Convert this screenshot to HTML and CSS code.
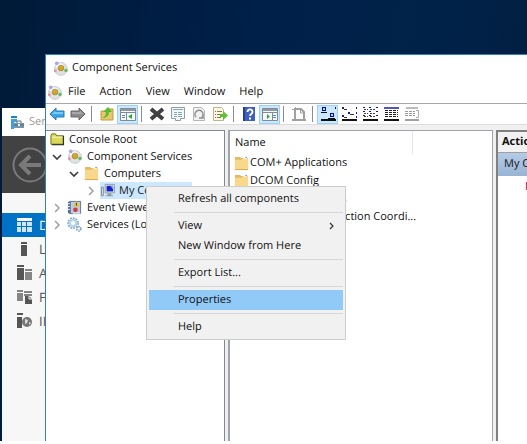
FILE: index.html
```html
<!DOCTYPE html>
<html lang="en">
<head>
<meta charset="utf-8">
<title>Component Services</title>
<link rel="stylesheet" href="styles.css">
</head>
<body>
<svg class="defs" aria-hidden="true">
  <symbol id="com" viewBox="0 0 16 16">
    <circle cx="8.500" cy="8.500" r="6.800" fill="#dfe2e4" stroke="#c6cacd" stroke-width="1"/>
    <ellipse cx="7" cy="5" rx="4" ry="2.500" fill="#f8f9fa"/>
    <circle cx="4" cy="2.500" r="2" fill="#a9a6ea"/>
    <circle cx="2.500" cy="10.500" r="1.500" fill="#ec8c96"/>
    <circle cx="13.800" cy="10" r="1.800" fill="#5fb95b"/>
    <circle cx="8.500" cy="7.500" r="3" fill="#eec63c" stroke="#8a6a10" stroke-width=".7"/>
    <path d="M7 6h1v1H7zM9 6h1v1H9zM7 8h1v1H7zM9 8h1v1H9z" fill="#6b4f0a"/>
  </symbol>
  <symbol id="folder" viewBox="0 0 16 16">
    <path d="M1 1h6v1h8v13H1z" fill="#e3b961"/>
    <path d="M1 4h7l1-1h6v11H1z" fill="#f8d98b"/>
    <path d="M1 14h14v1H1z" fill="#d8aa50"/>
    <path d="M10 1h4v2h-4z" fill="#fff"/><path d="M12 1h2v1h-2z" fill="#5a9bd0"/>
  </symbol>
  <symbol id="root" viewBox="0 0 16 16">
    <path d="M1 4l1-2h4l1 2h7v9H1z" fill="#d9d95c" stroke="#6d6d18"/>
    <path d="M2 5h11v1H2z" fill="#f9f9c0"/><path d="M14 4h1v10H2v-1h12z" fill="#222"/>
  </symbol>
  <symbol id="down" viewBox="0 0 10 10"><path d="M1 3l4 4 4-4" fill="none" stroke="#404040" stroke-width="1.700"/></symbol>
  <symbol id="right" viewBox="0 0 10 10"><path d="M3 1l4 4-4 4" fill="none" stroke="#a0a0a0" stroke-width="1.500"/></symbol>
</svg>

<main class="desktop">
  <section class="window manager" aria-label="Server Manager">
    <header class="manager-title">
      <svg width="15" height="16" viewBox="0 0 15 16"><path d="M1 2h6v2H1z" fill="#1686c8"/><path d="M1 5h6v3H4v7H1z" fill="#41a0d8"/><path d="M4 9h10v5H4z" fill="#7696ab"/><path d="M7 9V7h4v2M4 11h10" fill="none" stroke="#506f85"/><path d="M8 10h2v2H8z" fill="#fff"/></svg>
      <span>Server Manager</span>
    </header>
    <div class="manager-bar">
      <svg width="36" height="36" viewBox="0 0 36 36" fill="none" stroke="#7a7a7a"><circle cx="18" cy="18" r="16.500" stroke-width="2"/><path d="M29 18H10M18 9l-9 9 9 9" stroke-width="4"/></svg>
    </div>
    <nav class="manager-nav">
      <a href="#" class="current"><svg width="16" height="16" viewBox="0 0 16 16"><path d="M0 1h15v3H0z" fill="#fff"/><path d="M0 5h4v4H0zM5 5h4v4H5zM10 5h5v4h-5zM0 10h4v5H0zM5 10h4v5H5zM10 10h5v5h-5z" fill="#cfe5f5"/></svg>Dashboard</a>
      <a href="#"><svg width="16" height="16" viewBox="0 0 16 16" fill="#555"><path d="M4 1h6v2H4zM4 4h6v11H4z"/></svg>Local Server</a>
      <a href="#"><svg width="16" height="16" viewBox="0 0 16 16" fill="#555"><path d="M0 0h7v2H0zM0 3h7v12H0z"/><path d="M8 4h7v2H8zM8 7h7v8H8z" fill="#858585"/></svg>All Servers</a>
      <a href="#"><svg width="16" height="16" viewBox="0 0 16 16" fill="#858585"><path d="M0 1h6v2H0zM0 4h6v8H0zM7 2h8v2H7zM7 5h8v2H7z"/><path d="M8 7h4l3 3v5H8z" fill="#555"/><path d="M12 7v3h3" fill="none" stroke="#f7f7f7"/></svg>File and Storage Services</a>
      <a href="#"><svg width="16" height="16" viewBox="0 0 16 16" fill="#555"><path d="M0 0h6v2H0zM0 4h5v11H0z"/><circle cx="10" cy="9" r="5" fill="#777"/><path d="M8 6l3 1-1 3-2 1zM12 9l2 1-2 2z" fill="#ddd"/></svg>IIS</a>
    </nav>
  </section>

  <section class="window console" aria-label="Component Services">
    <header class="titlebar"><svg class="icon"><use href="#com"/></svg><span>Component Services</span></header>
    <div class="menubar">
      <svg class="icon"><use href="#com"/></svg>
      <button>File</button><button>Action</button><button>View</button><button>Window</button><button>Help</button>
    </div>
    <div class="toolbar">
      <button aria-label="Back"><svg viewBox="0 0 16 16"><path d="M1 8l6-6v3h8v6H7v3z" fill="#3ba5e6" stroke="#247db8"/><path d="M3 8l3-3v1h8v2z" fill="#79ccf5"/></svg></button>
      <button aria-label="Forward"><svg viewBox="0 0 16 16"><path d="M15 8L9 2v3H1v6h8v3z" fill="#8b8b8b" stroke="#666"/><path d="M2 6h8V5l3 3H2z" fill="#a8a8a8"/></svg></button>
      <i></i>
      <button aria-label="Up one level"><svg viewBox="0 0 16 16"><path d="M2 5h5l1-2h6v11H2z" fill="#e9c66d" stroke="#c39a43"/><path d="M3 12c3-1 4-3 4-6H4l5-5 4 5h-3c0 4-3 6-7 6z" fill="#56bd2c"/></svg></button>
      <button class="pressed" aria-label="Show console tree"><svg viewBox="0 0 16 16"><path d="M.5 2.500h15v12H.5z" fill="#f5f7f8" stroke="#7f8b96"/><path d="M1 3h14v2H1z" fill="#8e99a3"/><path d="M6.500 7v7M1 6.500h14" stroke="#7f8b96"/><path d="M2 9.500h3M2 11.500h3" stroke="#6688b0"/><path d="M12 8v5l-4-2.500z" fill="#35a82f"/></svg></button>
      <i></i>
      <button aria-label="Delete"><svg viewBox="0 0 16 16"><path d="M2 3l12 10M14 3L2 13" stroke="#414141" stroke-width="4"/></svg></button>
      <button aria-label="Properties"><svg viewBox="0 0 16 16"><path d="M1.500 1.500h13v11h-4v2h-5v-2h-4z" fill="#f4f6f7" stroke="#919ca3"/><path d="M3 3.500h10M4 6.500h3M8 6.500h4M4 8.500h3M8 8.500h4M4 10.500h3M8 10.500h4" stroke="#7fa9bd"/></svg></button>
      <button aria-label="Refresh"><svg viewBox="0 0 16 16"><path d="M2.500 1.500h8l3 3v10h-11z" fill="#f2f2f2" stroke="#b5b5b5"/><path d="M5 11a4 4 0 1 1 6 0M12 8v4H8" fill="none" stroke="#8f8f8f" stroke-width="1.500"/></svg></button>
      <button aria-label="Export list"><svg viewBox="0 0 16 16"><path d="M1.500 1.500h8l2 2v11h-10z" fill="#fdf8dc" stroke="#bdb68c"/><path d="M3 5.500h1M5 5.500h5M3 8.500h1M5 8.500h4M3 11.500h1M5 11.500h4" stroke="#777"/><path d="M8 8h3V5l5 4.500-5 4.500v-3H8z" fill="#5cc431"/></svg></button>
      <i></i>
      <button aria-label="Help"><svg viewBox="0 0 16 16"><path d="M2 1h12v14H2z" fill="#3d5fc4"/><path d="M2 1h2v14H2z" fill="#263f8e"/><path d="M6.500 6c0-3.500 5-3.500 5 0 0 2-2.500 2-2.500 4" fill="none" stroke="#fff" stroke-width="1.800"/><path d="M8 11.500h2v2H8z" fill="#fff"/></svg></button>
      <button class="pressed" aria-label="Show action pane"><svg viewBox="0 0 16 16"><path d="M.5 2.500h15v12H.5z" fill="#f5f7f8" stroke="#7f8b96"/><path d="M1 3h14v2H1z" fill="#8e99a3"/><path d="M10.500 7v7M1 6.500h14" stroke="#7f8b96"/><path d="M11 9.500h3M11 11.500h3" stroke="#6688b0"/><path d="M5 8v5l3-2.500z" fill="#35a82f"/></svg></button>
      <i></i>
      <button aria-label="New"><svg viewBox="0 0 16 16"><path d="M4 13V3h6l3 3v7" fill="#fff" stroke="#a0a0a0" stroke-width="2"/><path d="M9.500 3v4h3M1 3.500h5M4.500 1v5" fill="none" stroke="#a0a0a0"/><path d="M1 13h14v2H1z" fill="#a0a0a0"/></svg></button>
      <i></i>
      <button class="pressed" aria-label="Large icons"><svg viewBox="0 0 16 16"><path d="M2 1h4v4H2zM10 7h4v4h-4z" fill="#0b0b9a"/><path d="M3 2h2v2H3zM11 8h2v2h-2z" fill="#b9d3f5"/><path d="M15.500 1v2" stroke="#0b0b9a"/><path d="M1 6.500h6M8 12.500h7" stroke="#111"/><path d="M1 13h15v2H1z" fill="#111"/></svg></button>
      <button aria-label="Small icons"><svg viewBox="0 0 16 16"><path d="M1 1h2v2H1zM7 6h2v2H7zM1 9h2v2H1zM15 1h1v2h-1zM15 6h1v2h-1zM15 10h1v2h-1z" fill="#1717a0"/><path d="M3 3.500h3M9 8.500h4M3 11.500h3" stroke="#333"/><path d="M1 13h15v2H1z" fill="#111"/></svg></button>
      <button aria-label="List"><svg viewBox="0 0 16 16"><path d="M1 1h2v1H1zM1 5h2v1H1zM1 9h2v1H1zM7 1h2v1H7zM7 5h2v1H7zM7 9h2v1H7zM14 1h2v1h-2zM14 5h2v1h-2zM14 9h2v1h-2z" fill="#1717a0"/><path d="M2 3.500h4M2 7.500h4M2 10.500h4M8 3.500h5M8 7.500h5M8 10.500h5" stroke="#444" stroke-dasharray="2 1"/><path d="M1 13h15v2H1z" fill="#111"/></svg></button>
      <button aria-label="Details"><svg viewBox="0 0 16 16"><path d="M1 1h15v2H1z" fill="#5555b5"/><path d="M2 4.500h13M2 6.500h13M2 8.500h13M2 10.500h13" stroke="#222" stroke-dasharray="3 1"/><path d="M1 13h15v2H1z" fill="#111"/></svg></button>
      <button aria-label="Customize"><svg viewBox="0 0 16 16"><path d="M2 1h12v2H2z" fill="#bbb"/><path d="M1 5.500h10M1 7.500h10M1 9.500h10" stroke="#999" stroke-dasharray="3 1"/><path d="M12 4.500h2.500v7H12" fill="none" stroke="#aaa"/><path d="M1 13h14v2H1z" fill="#a0a0a0"/></svg></button>
    </div>

    <div class="panes">
      <ul class="tree">
        <li><svg class="icon"><use href="#root"/></svg>Console Root</li>
        <li class="l1"><svg class="twist"><use href="#down"/></svg><svg class="icon"><use href="#com"/></svg>Component Services</li>
        <li class="l2"><svg class="twist"><use href="#down"/></svg><svg class="icon"><use href="#folder"/></svg>Computers</li>
        <li class="l3"><svg class="twist"><use href="#right"/></svg><span class="selected"><svg class="icon" viewBox="0 0 16 16"><path d="M1.500 4.500h2v9h-2z" fill="#e4e7e9" stroke="#7d858b"/><path d="M5.500 1.500h10v9h-10z" fill="#dde3e8" stroke="#939da5"/><path d="M7 3h7v6H7z" fill="#1721c9"/><path d="M11 3h3v4z" fill="#86a7f2"/><path d="M8 11h4v2h2v1H6v-1h2z" fill="#929aa0"/></svg>My Computer</span></li>
        <li class="l1"><svg class="twist"><use href="#right"/></svg><svg class="icon" viewBox="0 0 16 16"><path d="M2.500 1.500h12v13h-12z" fill="#b9cbe6" stroke="#5a6f96"/><path d="M1 2h3v12H1z" fill="#596b8d"/><path d="M1 4h2M1 7h2M1 10h2" stroke="#fff"/><path d="M10 1l4 6H7z" fill="#f3c716"/><path d="M10 3v3" stroke="#333"/><circle cx="9" cy="10.500" r="2.500" fill="#cf3d3c"/><path d="M6 14h8" stroke="#fff"/></svg>Event Viewer (Local)</li>
        <li class="l1"><svg class="twist"><use href="#right"/></svg><svg class="icon" viewBox="0 0 16 16" fill="none"><circle cx="6.500" cy="6.500" r="5.300" stroke="#88adc7" stroke-width="2" stroke-dasharray="2 1"/><circle cx="6.500" cy="6.500" r="3.500" stroke="#b6d5e8" stroke-width="2.500"/><circle cx="12.500" cy="12.500" r="2.200" stroke="#85a9c3" stroke-width="2" stroke-dasharray="1.500 .7"/></svg>Services (Local)</li>
      </ul>
      <div class="list">
        <div class="list-head">Name</div>
        <ul>
          <li><svg class="icon"><use href="#folder"/></svg>COM+ Applications</li>
          <li><svg class="icon"><use href="#folder"/></svg>DCOM Config</li>
          <li><svg class="icon"><use href="#folder"/></svg>Running Processes</li>
          <li><svg class="icon"><use href="#folder"/></svg>Distributed Transaction Coordi...</li>
        </ul>
      </div>
      <aside class="actions">
        <h2>Actions</h2>
        <h3>My Computer</h3>
        <a href="#">More Actions</a>
      </aside>
    </div>
  </section>

  <div class="context" role="menu">
    <button role="menuitem">Refresh all components</button>
    <hr>
    <button role="menuitem">View<svg width="10" height="10" viewBox="0 0 10 10"><path d="M3 2l3 3-3 3" fill="none" stroke="#333" stroke-width="1.200"/></svg></button>
    <button role="menuitem">New Window from Here</button>
    <hr>
    <button role="menuitem">Export List...</button>
    <hr>
    <button role="menuitem" class="hover">Properties</button>
    <hr>
    <button role="menuitem">Help</button>
  </div>
</main>
</body>
</html>
```
FILE: styles.css
```css
* { box-sizing: border-box; }

body {
  margin: 0;
  height: 100vh;
  padding-bottom: 3px;
  background: #fff;
  color: #111;
  font: 11px/16px "Open Sans", "Noto Sans", sans-serif;
  text-rendering: geometricPrecision;
  overflow: hidden;
}

button {
  margin: 0;
  padding: 0;
  border: 0;
  background: none;
  color: inherit;
  font: inherit;
  text-rendering: inherit;
}

ul { margin: 0; padding: 0; list-style: none; }
a { color: inherit; text-decoration: none; }
svg { flex: none; }
.defs { position: absolute; width: 0; height: 0; }
.icon { width: 15px; height: 15px; }

.desktop {
  position: relative;
  height: 100%;
  overflow: hidden;
  background: linear-gradient(100deg, #001a38 0%, #00204a 45%, #012248 75%, #001c3c 100%);
}

.window {
  position: absolute;
  display: flex;
  flex-direction: column;
  overflow: hidden;
  white-space: nowrap;
}

/* Server Manager, behind the console */
.manager {
  left: 2px;
  top: 108px;
  bottom: 0;
  width: 50%;
  background: #f7f7f7;
}
.manager-title {
  display: flex;
  align-items: center;
  gap: 4px;
  height: 28px;
  padding-left: 8px;
  background: #fff;
  color: #999;
}
.manager-bar {
  display: flex;
  align-items: center;
  height: 57px;
  padding-left: 10px;
  background: #424242;
}
.manager-nav { padding-top: 20px; color: #555; }
.manager-nav a {
  display: flex;
  align-items: center;
  gap: 6px;
  height: 24px;
  padding-left: 15px;
  font-size: 13px;
}
.manager-nav .current { background: #0072c6; color: #fff; }

/* Component Services console */
.console {
  left: 45px;
  right: 0;
  top: 54px;
  bottom: 0;
  border: 1px solid #2f80c0;
  border-width: 1px 0 0 1px;
  background: #fff;
}
.titlebar {
  display: flex;
  align-items: center;
  gap: 4px;
  height: 26px;
  padding-left: 7px;
}
.menubar {
  display: flex;
  align-items: center;
  gap: 14px;
  height: 23px;
  padding-left: 1px;
  border-bottom: 1px solid #a8a8a8;
}
.menubar .icon { margin-right: -8px; }
.toolbar {
  display: flex;
  align-items: center;
  height: 20px;
}
.toolbar button {
  display: grid;
  place-items: center;
  width: 21px;
  height: 19px;
}
.toolbar button svg { width: 16px; height: 16px; }
.toolbar .pressed { background: #cce8ff; box-shadow: inset 0 0 0 1px #99d1ff; }
.toolbar i { width: 8px; height: 16px; }
.toolbar i::before {
  content: "";
  display: block;
  width: 1px;
  height: 100%;
  margin-left: 3px;
  background: #8c8c8c;
}

.panes {
  flex: 1;
  display: grid;
  grid-template-columns: 179px 1fr 31px;
  gap: 3px;
  padding-top: 5px;
  background: #f0f0f0;
  border-top: 1px solid #dcdcdc;
}
.tree {
  padding-left: 4px;
  border-top: 1px solid #828790;
  border-right: 1px solid #828790;
  background: #fff;
  overflow: hidden;
}
.tree li { display: flex; align-items: center; gap: 4px; height: 17px; }
.tree .l1 { padding-left: 2px; }
.tree .l2 { padding-left: 19px; }
.tree .l3 { padding-left: 36px; }
.tree .l1, .tree .l2 { gap: 5px; }
.twist { width: 10px; height: 10px; }
.selected {
  display: flex;
  align-items: center;
  gap: 4px;
  width: 92px;
  height: 17px;
  background: #cce8ff;
}

.list {
  border: 1px solid #a0a3aa;
  border-width: 1px 1px 0 2px;
  background: #fff;
  overflow: hidden;
}
.list-head {
  width: 183px;
  height: 23px;
  padding: 4px 0 0 5px;
  border-right: 1px solid #e5e5e5;
}
.list li {
  display: flex;
  align-items: center;
  gap: 1px;
  height: 18px;
  padding-left: 4px;
}

.actions {
  border: 2px solid #808080;
  border-width: 2px 0 0 2px;
  background: #fff;
  overflow: hidden;
}
.actions h2, .actions h3 { margin: 0; font-size: 11px; }
.actions h2 {
  height: 21px;
  padding: 2px 0 0 4px;
  border-bottom: 1px solid #a0a0a0;
  background: #f2f2f2;
}
.actions h3 {
  height: 23px;
  padding: 3px 0 0 6px;
  background: linear-gradient(#b4cbe6, #98b4d4);
  font-weight: normal;
}
.actions a { display: block; padding: 3px 0 0 27px; color: #70003c; }

/* Shortcut menu */
.context {
  position: absolute;
  left: 146px;
  top: 186px;
  width: 200px;
  padding: 2px;
  border: 1px solid #ccc;
  background: #f1f1f1;
}
.context button {
  display: flex;
  align-items: center;
  justify-content: space-between;
  width: 100%;
  height: 20px;
  padding: 0 6px 0 29px;
}
.context hr {
  height: 1px;
  margin: 3px 0 3px 25px;
  border: 0;
  background: #d7d7d7;
}
.context .hover { background: #91c9f7; }
```
